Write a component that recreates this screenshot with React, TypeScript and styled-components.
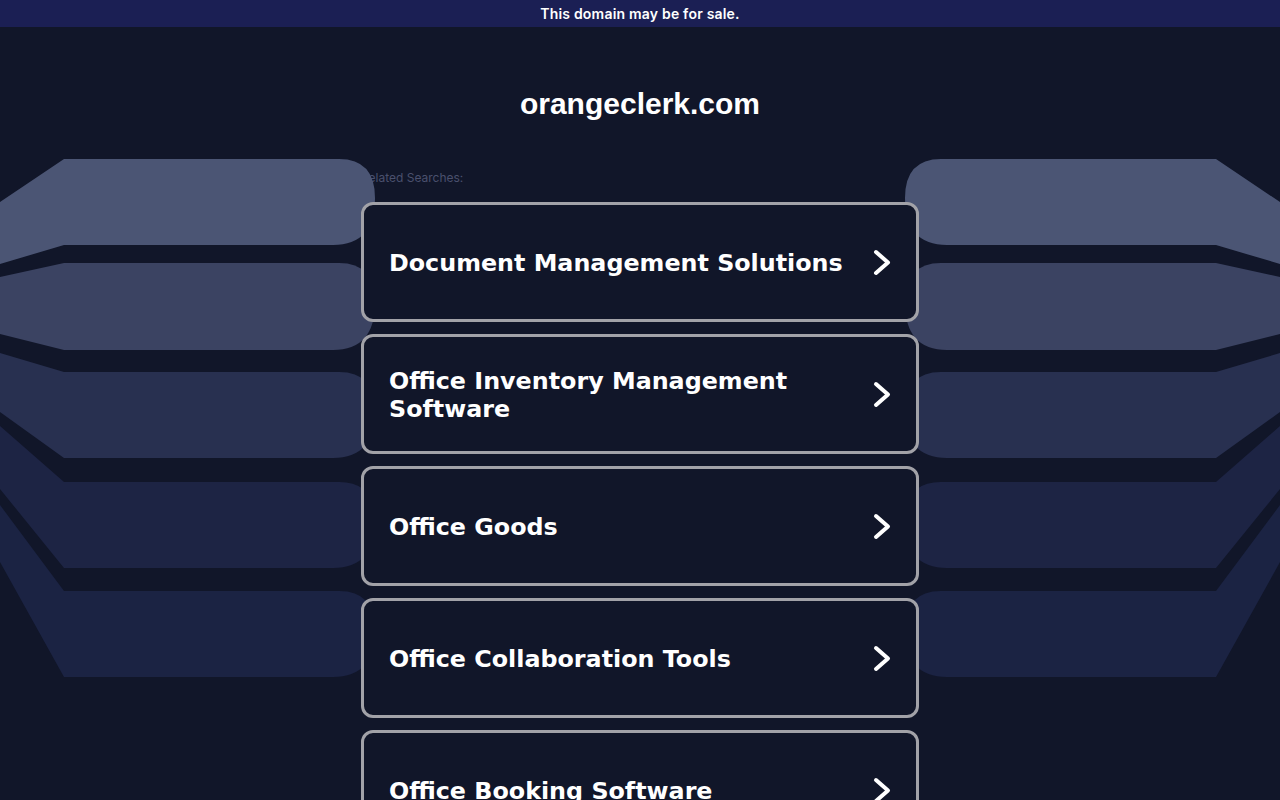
import * as React from 'react';
import styled, { createGlobalStyle } from 'styled-components';

const GlobalStyle = createGlobalStyle`
  html, body {
    margin: 0;
    padding: 0;
    background: #111629;
    overflow: hidden;
  }
  * {
    box-sizing: border-box;
  }
`;

const Page = styled.div`
  position: relative;
  min-height: 800px;
  background: #111629;
  font-family: 'Liberation Sans', Arial, sans-serif;
`;

const SaleBanner = styled.div`
  height: 27px;
  background: #1b1f54;
  color: #ffffff;
  display: flex;
  align-items: center;
  justify-content: center;
  font-family: Inter, 'Open Sans', sans-serif;
  font-weight: 600;
  font-size: 14px;
  letter-spacing: 0.2px;
`;

const DomainTitle = styled.h1`
  margin: 0;
  padding-top: 60px;
  height: 130px;
  text-align: center;
  font-family: 'Liberation Sans', Arial, sans-serif;
  font-weight: 700;
  font-size: 30px;
  line-height: 34px;
  color: #ffffff;
`;

const Content = styled.div`
  width: 558px;
  margin: 0 auto;
`;

const RelatedLabel = styled.div`
  height: 45px;
  padding-top: 13px;
  font-family: Inter, 'Open Sans', sans-serif;
  font-size: 12px;
  line-height: 15px;
  color: #4a506d;
`;

const Decoration = styled.svg`
  position: absolute;
  top: 0;
  left: 0;
  width: 1280px;
  height: 800px;
  pointer-events: none;
  z-index: 1;
`;

const CardList = styled.div`
  position: relative;
  z-index: 2;
  display: flex;
  flex-direction: column;
  gap: 12px;
`;

const Card = styled.a`
  height: 120px;
  display: flex;
  align-items: center;
  justify-content: space-between;
  gap: 20px;
  padding: 0 25px 0 25px;
  border: 3px solid #a2a2a8;
  border-radius: 12px;
  background: #111629;
  color: #ffffff;
  text-decoration: none;
`;

const CardText = styled.span`
  margin-top: 2px;
  font-family: 'DejaVu Sans', Verdana, sans-serif;
  font-weight: 700;
  font-size: 23.8px;
  line-height: 28px;
`;

const Chevron = styled.svg`
  flex: 0 0 auto;
  width: 18px;
  height: 27px;
`;

type Stripe = { topL: number; top: number; bot: number; botL: number; fill: string };

const stripes: Stripe[] = [
  { topL: 202, top: 159, bot: 245, botL: 264, fill: '#4b5574' },
  { topL: 277, top: 263, bot: 350, botL: 334, fill: '#3b4362' },
  { topL: 353, top: 372, bot: 458, botL: 412, fill: '#283050' },
  { topL: 426, top: 482, bot: 568, botL: 489, fill: '#1d2444' },
  { topL: 505, top: 591, bot: 677, botL: 562, fill: '#1b2343' },
];

// left-hand stripe; the right-hand one is its mirror
function stripePath(s: Stripe) {
  const kink = 64;
  const end = 375;
  const r = 36;
  const mid = (s.top + s.bot) / 2 - 4;
  return [
    `M0,${s.topL}`,
    `L${kink},${s.top}`,
    `L${end - r},${s.top}`,
    `Q${end},${s.top} ${end},${mid}`,
    `Q${end},${s.bot} ${end - r - 6},${s.bot}`,
    `L${kink},${s.bot}`,
    `L0,${s.botL}`,
    'Z',
  ].join(' ');
}

const searches = [
  'Document Management Solutions',
  'Office Inventory Management Software',
  'Office Goods',
  'Office Collaboration Tools',
  'Office Booking Software',
];

function ArrowIcon() {
  return (
    <Chevron viewBox="0 0 18 27">
      <polyline
        points="3,3 15,13.5 3,24"
        fill="none"
        stroke="#ffffff"
        strokeWidth="4"
        strokeLinecap="round"
        strokeLinejoin="round"
      />
    </Chevron>
  );
}

export default function App() {
  return (
    <Page>
      <GlobalStyle />
      <SaleBanner>This domain may be for sale.</SaleBanner>
      <DomainTitle>orangeclerk.com</DomainTitle>
      <Decoration viewBox="0 0 1280 800">
        {stripes.map((s, i) => (
          <g key={i} fill={s.fill}>
            <path d={stripePath(s)} />
            <path d={stripePath(s)} transform="translate(1280 0) scale(-1 1)" />
          </g>
        ))}
      </Decoration>
      <Content>
        <RelatedLabel>Related Searches:</RelatedLabel>
        <CardList>
          {searches.map((label) => (
            <Card key={label} href="#">
              <CardText>{label}</CardText>
              <ArrowIcon />
            </Card>
          ))}
        </CardList>
      </Content>
    </Page>
  );
}
